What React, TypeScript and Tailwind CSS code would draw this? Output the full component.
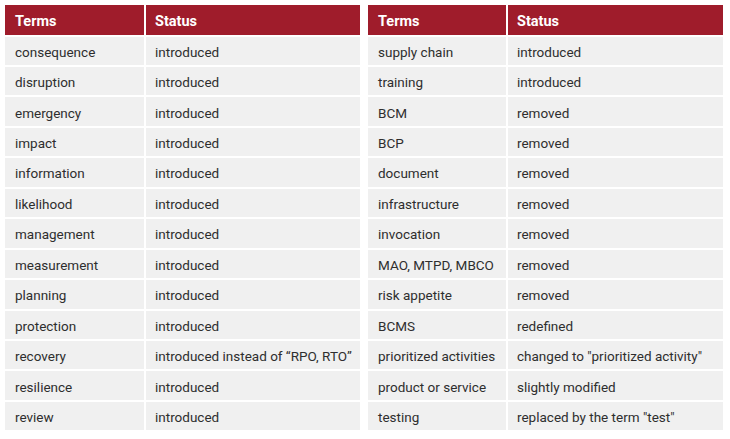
const left: [string, string][] = [
  ['consequence', 'introduced'],
  ['disruption', 'introduced'],
  ['emergency', 'introduced'],
  ['impact', 'introduced'],
  ['information', 'introduced'],
  ['likelihood', 'introduced'],
  ['management', 'introduced'],
  ['measurement', 'introduced'],
  ['planning', 'introduced'],
  ['protection', 'introduced'],
  ['recovery', 'introduced instead of \u201cRPO, RTO\u201d'],
  ['resilience', 'introduced'],
  ['review', 'introduced'],
]

const right: [string, string][] = [
  ['supply chain', 'introduced'],
  ['training', 'introduced'],
  ['BCM', 'removed'],
  ['BCP', 'removed'],
  ['document', 'removed'],
  ['infrastructure', 'removed'],
  ['invocation', 'removed'],
  ['MAO, MTPD, MBCO', 'removed'],
  ['risk appetite', 'removed'],
  ['BCMS', 'redefined'],
  ['prioritized activities', 'changed to "prioritized activity"'],
  ['product or service', 'slightly modified'],
  ['testing', 'replaced by the term "test"'],
]

function TermsTable({ rows, cols }: { rows: [string, string][]; cols: string }) {
  return (
    <div className={`grid ${cols} gap-x-[2px] gap-y-[2px] auto-rows-[28.46px] grid-rows-[29.5px]`}>
      <div className="bg-[#9f1c2b] text-white text-[14.5px] font-bold pl-[10px] pt-[4px] flex items-center">Terms</div>
      <div className="bg-[#9f1c2b] text-white text-[14.5px] font-bold pl-[9px] pt-[4px] flex items-center">Status</div>
      {rows.map(([term, status]) => (
        <div key={term} className="contents">
          <div className="bg-[#f0f0f0] pl-[10px] pt-[2px] flex items-center whitespace-nowrap">{term}</div>
          <div className="bg-[#f0f0f0] pl-[9px] pt-[2px] flex items-center whitespace-nowrap">{status}</div>
        </div>
      ))}
    </div>
  )
}

export default function App() {
  return (
    <div
      className="w-[730px] h-[439px] bg-white pt-[5px] pl-[5px] flex gap-[8px] text-[13.5px] text-[#2e2e2e]"
      style={{ fontFamily: 'Roboto, "Liberation Sans", sans-serif' }}
    >
      <div className="w-[355px]">
        <TermsTable rows={left} cols="grid-cols-[139px_214px]" />
      </div>
      <div className="w-[355px]">
        <TermsTable rows={right} cols="grid-cols-[138px_215px]" />
      </div>
    </div>
  )
}
